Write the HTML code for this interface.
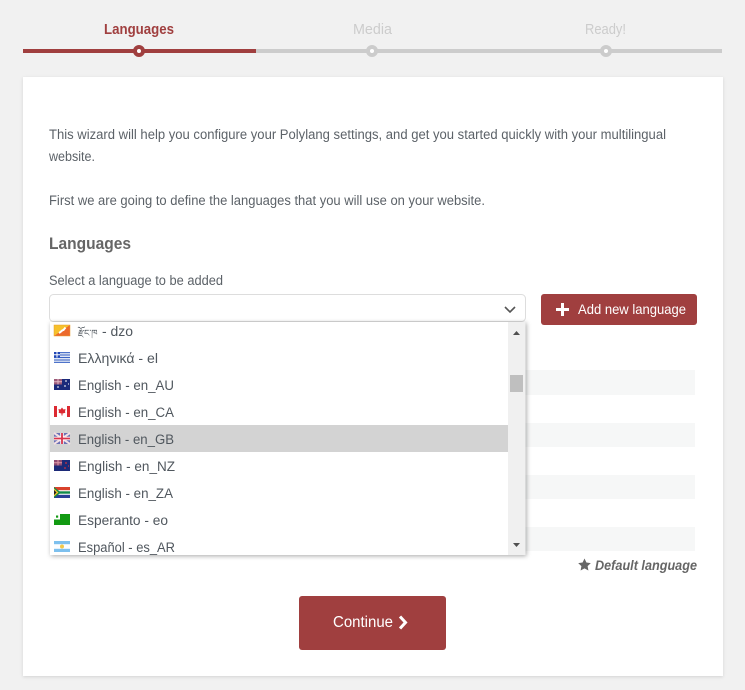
<!DOCTYPE html>
<html><head><meta charset="utf-8"><style>
html,body{margin:0;padding:0;width:745px;height:690px;overflow:hidden;background:#f1f1f1}
svg{display:block}
text{font-family:"Liberation Sans","Noto Sans CJK SC",sans-serif;font-size:13.5px;fill:#5c6268}
.r{fill:#50575e;font-size:13.5px}
</style></head><body>
<svg width="745" height="690" viewBox="0 0 745 690" xmlns="http://www.w3.org/2000/svg">
<defs>
<filter id="s" x="-5%" y="-5%" width="110%" height="110%"><feDropShadow dx="0" dy="1" stdDeviation="1.5" flood-color="#000" flood-opacity=".13"/></filter>
<filter id="d" x="-5%" y="-5%" width="110%" height="110%"><feDropShadow dx="1" dy="1" stdDeviation="2.5" flood-color="#000" flood-opacity=".35"/></filter>
<clipPath id="c"><rect x="50" y="322" width="458" height="233"/></clipPath>
</defs>
<rect width="745" height="690" fill="#f1f1f1"/>
<!-- steps -->
<rect x="23" y="49" width="699" height="4" fill="#ccc"/>
<rect x="23" y="49" width="233" height="4" fill="#a03f3f"/>
<circle cx="139" cy="51" r="4" fill="#fff" stroke="#a03f3f" stroke-width="4"/>
<circle cx="372" cy="51" r="4" fill="#fff" stroke="#ccc" stroke-width="4"/>
<circle cx="606" cy="51" r="4" fill="#fff" stroke="#ccc" stroke-width="4"/>
<text x="104" y="34" textLength="70" lengthAdjust="spacingAndGlyphs" style="font-weight:bold;fill:#a03f3f;font-size:14.5px">Languages</text>
<text x="353" y="34" textLength="39" lengthAdjust="spacingAndGlyphs" style="fill:#ccc;font-size:14.5px">Media</text>
<text x="585" y="34" textLength="41" lengthAdjust="spacingAndGlyphs" style="fill:#ccc;font-size:14.5px">Ready!</text>
<!-- card -->
<rect x="23" y="77" width="700" height="599" fill="#fff" filter="url(#s)"/>
<text x="49" y="139" textLength="617" lengthAdjust="spacingAndGlyphs">This wizard will help you configure your Polylang settings, and get you started quickly with your multilingual</text>
<text x="49" y="161" textLength="46" lengthAdjust="spacingAndGlyphs">website.</text>
<text x="49" y="205" textLength="436" lengthAdjust="spacingAndGlyphs">First we are going to define the languages that you will use on your website.</text>
<text x="49" y="249" textLength="82" lengthAdjust="spacingAndGlyphs" style="font-weight:bold;font-size:16.5px;fill:#666">Languages</text>
<text x="49" y="285" textLength="174" lengthAdjust="spacingAndGlyphs">Select a language to be added</text>
<!-- stripes -->
<rect x="50" y="370" width="645" height="25" fill="#f6f7f7"/>
<rect x="50" y="423" width="645" height="24" fill="#f6f7f7"/>
<rect x="50" y="475" width="645" height="24" fill="#f6f7f7"/>
<rect x="50" y="527" width="645" height="24" fill="#f6f7f7"/>
<!-- select -->
<rect x="49.5" y="294.5" width="476" height="27" rx="4" fill="#fff" stroke="#ddd"/>
<path d="M505 307l5 5 5-5" fill="none" stroke="#555" stroke-width="1.6"/>
<!-- add button -->
<rect x="541" y="294" width="156" height="31" rx="3" fill="#a03f3f"/>
<path d="M556 309.5h13M562.5 303v13" stroke="#fff" stroke-width="3"/>
<text x="578" y="314" textLength="108" lengthAdjust="spacingAndGlyphs" style="fill:#fff;font-size:14px">Add new language</text>
<!-- dropdown -->
<rect x="50" y="322" width="475.500" height="233" fill="#fff" filter="url(#d)"/>
<g clip-path="url(#c)">
<rect x="50" y="425" width="458" height="27" fill="#d3d3d3"/>
<!-- flags -->
<rect x="54" y="325" width="16" height="11" fill="#f6c12c"/><path d="M54 336L70 325V336Z" fill="#ec6a2c"/><rect x="54" y="325" width="16" height="11" fill="none" stroke="#e8a030" stroke-width=".5"/><path d="M59 333c2-1 3-3 4.500-3l2-2.500" fill="none" stroke="#fff" stroke-width="2"/>
<rect x="54" y="352" width="16" height="11" fill="#dfe6f5"/><path d="M54 352.600h16M54 355h16M54 357.500h16M54 360h16M54 362.400h16" stroke="#3a63c4" stroke-width="1"/><rect x="54" y="352" width="6" height="5.500" fill="#1f45b5"/><path d="M57 352v5.500M54 354.700h6" stroke="#fff" stroke-width="1"/>
<rect x="54" y="379" width="16" height="11" fill="#1b2a7a"/><rect x="54" y="379" width="8" height="5.500" fill="#9c5a78"/><path d="M54 381.700h8M58 379v5.500" stroke="#e2b8c4" stroke-width="1"/><path d="M65 381h2M64 386h2M68 384h1M57 387h2" stroke="#fff"/>
<rect x="54" y="406" width="16" height="11" fill="#fff"/><rect x="54" y="406" width="3" height="11" fill="#dc2a32"/><rect x="67" y="406" width="3" height="11" fill="#dc2a32"/><path d="M62 407.500l1.500 2 2 -.500-.500 3 .500 .800-3 .700v2h-1v-2l-3-.700 .500-.800-.500-3 2 .500z" fill="#dc2a32"/>
<rect x="54" y="433" width="16" height="11" fill="#6a70b4"/><path d="M54 433l16 11M70 433l-16 11" stroke="#f3dfe3" stroke-width="2"/><path d="M62 433v11M54 438.500h16" stroke="#fff" stroke-width="3.500"/><path d="M62 433v11M54 438.500h16" stroke="#d8324a" stroke-width="1.800"/>
<rect x="54" y="460" width="16" height="11" fill="#1c2a78"/><rect x="54" y="460" width="8" height="5.500" fill="#8f4a70"/><path d="M54 462.700h8M58 460v5.500" stroke="#e09aa8" stroke-width="1"/><path d="M65 463h2M64 468h2M68 466h1" stroke="#e33"/>
<rect x="54" y="487" width="16" height="11" fill="#fff"/><rect x="54" y="487" width="16" height="3.200" fill="#d9412b"/><rect x="54" y="494.800" width="16" height="3.200" fill="#2a3f97"/><rect x="58" y="491.300" width="12" height="2.400" fill="#118a4a"/><path d="M54 487l7 5.500-7 5.500z" fill="#118a4a"/><path d="M54 488.500l4.500 4-4.500 4z" fill="#f5c52a"/><path d="M54 490l2.500 2.500-2.500 2.500z" fill="#222"/>
<rect x="54" y="514" width="16" height="11" fill="#129a12"/><rect x="54" y="514" width="6" height="5.500" fill="#fff"/><rect x="56" y="515.500" width="2.200" height="2.200" fill="#129a12"/>
<rect x="54" y="541" width="16" height="11" fill="#fbfdff"/><rect x="54" y="541" width="16" height="3.200" fill="#7dc0ee"/><rect x="54" y="548.800" width="16" height="3.200" fill="#7dc0ee"/><circle cx="62" cy="546.500" r="2" fill="#f1c84a"/>
<!-- labels -->
<text class="r" x="78" y="336" style="font-size:9px">རྫོང་ཁ</text>
<text class="r" x="102" y="336" textLength="31" lengthAdjust="spacingAndGlyphs">- dzo</text>
<text class="r" x="78" y="363" textLength="80" lengthAdjust="spacingAndGlyphs">Ελληνικά - el</text>
<text class="r" x="78" y="390" textLength="96" lengthAdjust="spacingAndGlyphs">English - en_AU</text>
<text class="r" x="78" y="417" textLength="96" lengthAdjust="spacingAndGlyphs">English - en_CA</text>
<text class="r" x="78" y="444" textLength="96" lengthAdjust="spacingAndGlyphs">English - en_GB</text>
<text class="r" x="78" y="471" textLength="97" lengthAdjust="spacingAndGlyphs">English - en_NZ</text>
<text class="r" x="78" y="498" textLength="95" lengthAdjust="spacingAndGlyphs">English - en_ZA</text>
<text class="r" x="78" y="525" textLength="90" lengthAdjust="spacingAndGlyphs">Esperanto - eo</text>
<text class="r" x="78" y="552" textLength="97" lengthAdjust="spacingAndGlyphs">Español - es_AR</text>
</g>
<!-- scrollbar -->
<rect x="508" y="322" width="17.500" height="233" fill="#f0f0f0"/>
<rect x="510" y="375" width="13" height="17" fill="#bfbfbf"/>
<path d="M513 335l3.500-4 3.500 4z" fill="#505050"/>
<path d="M513 543h7l-3.500 4z" fill="#505050"/>
<!-- default -->
<path d="M584.500 558.500l1.900 4 4.400.600-3.200 3 .800 4.400-3.900-2.100-3.900 2.100.800-4.400-3.200-3 4.400-.600z" fill="#666"/>
<text x="595" y="570" textLength="102" lengthAdjust="spacingAndGlyphs" style="font-style:italic;font-weight:bold;fill:#666;font-size:13.5px">Default language</text>
<!-- continue -->
<rect x="299" y="596" width="147" height="54" rx="3" fill="#a03f3f"/>
<text x="333" y="627" textLength="60" lengthAdjust="spacingAndGlyphs" style="fill:#fff;font-size:15.5px">Continue</text>
<path d="M400 616.500l5.500 6-5.500 6" fill="none" stroke="#fff" stroke-width="3"/>
</svg>
</body></html>
